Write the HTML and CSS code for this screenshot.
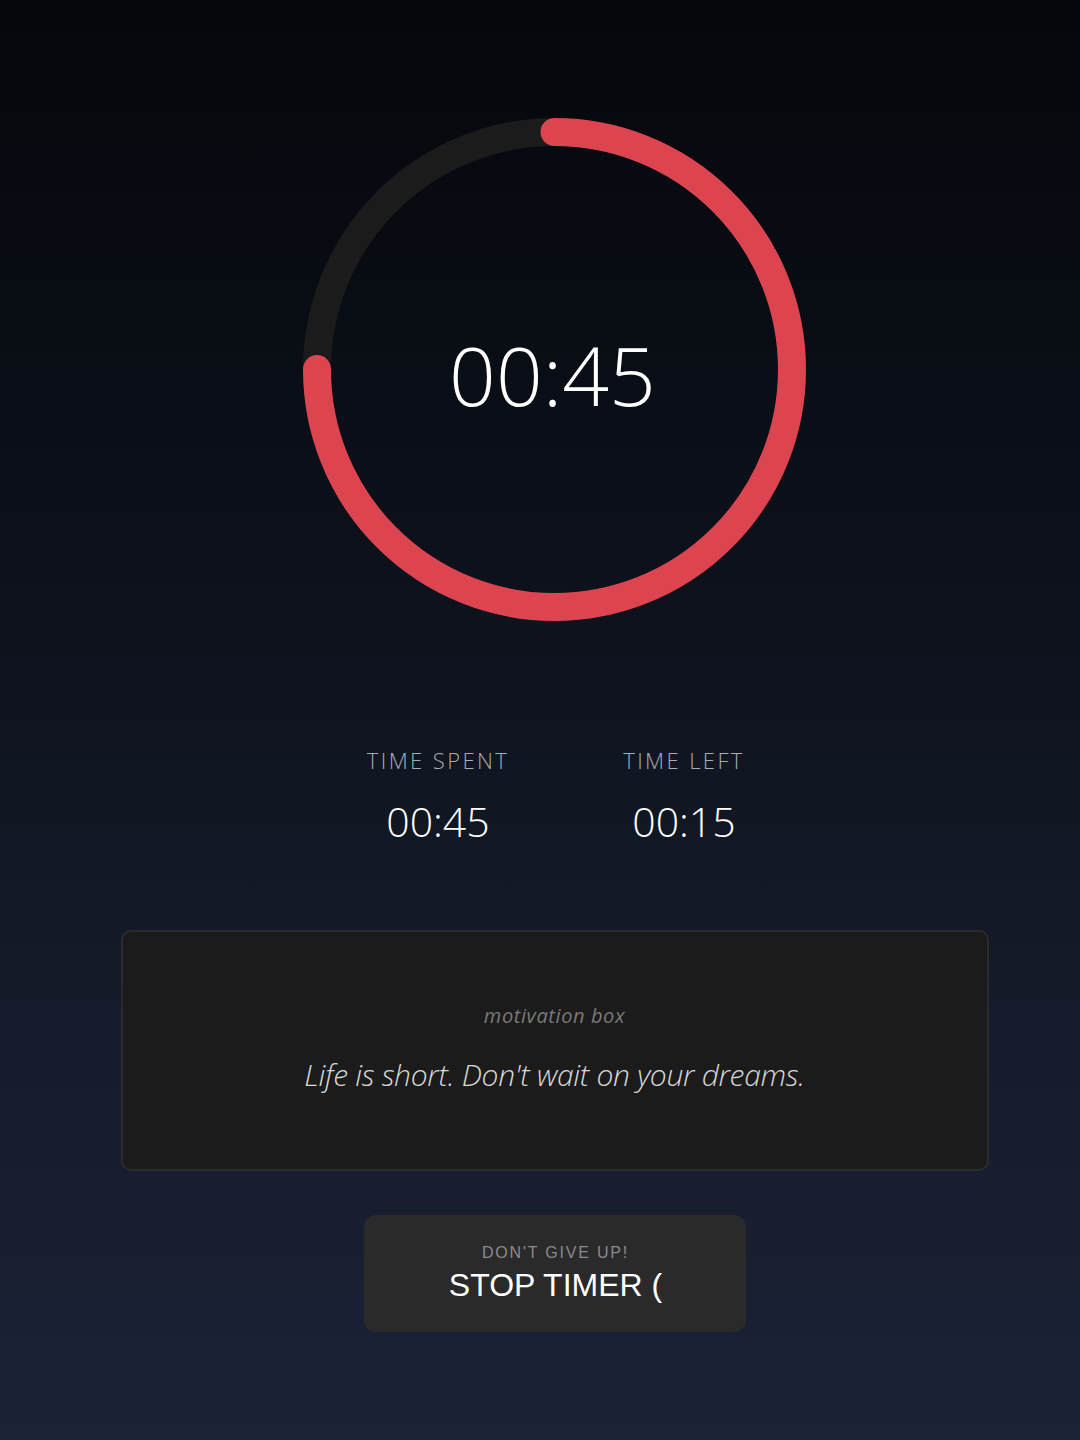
FILE: index.html
```html
<!DOCTYPE html>
<html lang="en">
<head>
<meta charset="utf-8">
<title>Timer</title>
<link rel="stylesheet" href="styles.css">
</head>
<body>
<main class="page">
  <section class="ring">
    <svg class="ring-svg" viewBox="0 0 503 503" width="503" height="503">
      <circle class="track" cx="251.5" cy="251.5" r="237.5"></circle>
      <circle class="progress" cx="251.5" cy="251.5" r="237.5" transform="rotate(-90 251.5 251.5)"></circle>
    </svg>
    <div class="ring-time">00:45</div>
  </section>

  <section class="stats">
    <div class="stat">
      <div class="stat-label">TIME SPENT</div>
      <div class="stat-value">00:45</div>
    </div>
    <div class="stat">
      <div class="stat-label">TIME LEFT</div>
      <div class="stat-value">00:15</div>
    </div>
  </section>

  <section class="motivation">
    <div class="motivation-label">motivation box</div>
    <div class="motivation-quote">Life is short. Don't wait on your dreams.</div>
  </section>

  <button class="stop-btn" type="button">
    <span class="stop-sub">DON'T GIVE UP!</span>
    <span class="stop-main">STOP TIMER (</span>
  </button>
</main>
</body>
</html>
```

FILE: styles.css
```css
* { box-sizing: border-box; }
html, body { margin: 0; padding: 0; }
body {
  width: 1080px;
  min-height: 1440px;
  background: linear-gradient(180deg, #05070b 0%, #0c111b 40%, #151b2a 70%, #1b2236 100%);
  font-family: "Open Sans", "Noto Sans", sans-serif;
  color: #fff;
}
.page {
  display: flex;
  flex-direction: column;
  align-items: center;
  padding-top: 118px;
  padding-left: 29px;
}
.ring {
  position: relative;
  width: 503px;
  height: 503px;
}
.ring-svg { display: block; }
.track {
  fill: none;
  stroke: #1b1b1b;
  stroke-width: 28;
}
.progress {
  fill: none;
  stroke: #dc4550;
  stroke-width: 28;
  stroke-linecap: round;
  stroke-dasharray: 1119.2 1492.3;
}
.ring-time {
  position: absolute;
  inset: 0;
  display: flex;
  align-items: center;
  justify-content: center;
  font-weight: 300;
  font-size: 82px;
  padding-top: 8px;
  padding-right: 4px;
  color: #fff;
}
.stats {
  display: flex;
  gap: 106px;
  margin-top: 124px;
  margin-left: 13px;
}
.stat {
  display: flex;
  flex-direction: column;
  align-items: center;
  width: 140px;
}
.stat-label {
  font-weight: 300;
  font-size: 22px;
  letter-spacing: 2.4px;
  color: #a8adb5;
  white-space: nowrap;
}
.stat-value {
  font-weight: 300;
  font-size: 41px;
  color: #fff;
  margin-top: 24px;
  line-height: 1.1;
}
.motivation {
  width: 868px;
  height: 241px;
  margin-top: 86px;
  background: #1b1b1b;
  border: 2px solid #2b2b2d;
  border-radius: 10px;
  display: flex;
  flex-direction: column;
  align-items: center;
  justify-content: center;
  gap: 25px;
  padding-bottom: 4px;
}
.motivation-label {
  font-style: italic;
  font-weight: 400;
  font-size: 20px;
  letter-spacing: 0.6px;
  color: #7a7a7a;
}
.motivation-quote {
  font-style: italic;
  font-weight: 300;
  font-size: 30px;
  color: #d8d8d8;
  letter-spacing: -0.3px;
}
.stop-btn {
  margin-top: 44px;
  width: 382px;
  height: 117px;
  background: #2a2a2a;
  border: none;
  border-radius: 12px;
  display: flex;
  flex-direction: column;
  align-items: center;
  justify-content: center;
  gap: 5px;
  padding: 0 0 0 2px;
  font-family: "Liberation Sans", Arial, sans-serif;
}
.stop-sub {
  font-size: 16px;
  letter-spacing: 1.8px;
  color: #8a8a8a;
}
.stop-main {
  font-size: 32px;
  color: #ffffff;
}
```
